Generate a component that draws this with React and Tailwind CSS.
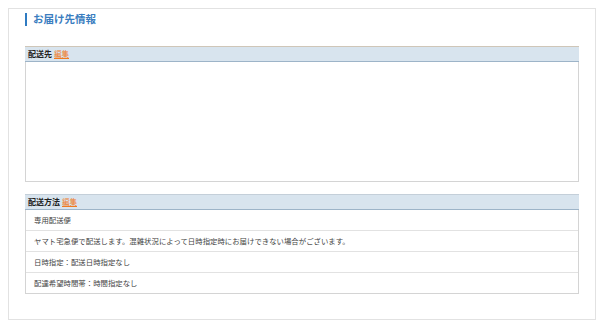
export default function App() {
  const rows = [
    '専用配送便',
    'ヤマト宅急便で配送します。混雑状況によって日時指定時にお届けできない場合がございます。',
    '日時指定：配送日時指定なし',
    '配達希望時間帯：時間指定なし',
  ]

  return (
    <div className="w-[599px] h-[333px] bg-white" style={{ fontFamily: '"Noto Sans CJK JP", "Noto Sans", sans-serif' }}>
      <div className="ml-[8px] pt-[8px]">
        <div className="w-[588px] h-[312px] border border-[#e2e2e2] px-[16px]">
          {/* Title */}
          <div className="flex items-center h-[13px] mt-[4px]">
            <div className="w-[2px] h-[13px] bg-[#2f7bc2]" />
            <h2 className="ml-[6px] text-[10.5px] font-bold text-[#3a7dc0] leading-none">お届け先情報</h2>
          </div>

          {/* 配送先 */}
          <div className="mt-[20px] border-x border-b border-[#d4d4d4]">
            <div className="h-[16px] bg-[#d8e4ee] border-t border-t-[#cfc6b8] border-b border-b-[#9db4c8] flex items-center px-[3px] gap-[2px] -mx-px">
              <span className="text-[8px] font-bold text-[#222] leading-none">配送先</span>
              <span className="text-[7.5px] text-[#f07a1e] underline leading-none">編集</span>
            </div>
            <div className="h-[119px]" />
          </div>

          {/* 配送方法 */}
          <div className="mt-[12px] border-x border-b border-[#d4d4d4]">
            <div className="h-[16px] bg-[#d8e4ee] border-t border-t-[#c4cfd9] border-b border-b-[#9db4c8] flex items-center px-[3px] gap-[2px] -mx-px">
              <span className="text-[8px] font-bold text-[#222] leading-none">配送方法</span>
              <span className="text-[7.5px] text-[#f07a1e] underline leading-none">編集</span>
            </div>
            {rows.map((r, i) => (
              <div
                key={i}
                className={`flex items-center pl-[8px] text-[7.4px] text-[#444] ${i > 0 ? 'h-[21px] border-t border-[#e2e2e2]' : 'h-[20px]'}`}
              >
                {r}
              </div>
            ))}
          </div>
        </div>
      </div>
    </div>
  )
}
